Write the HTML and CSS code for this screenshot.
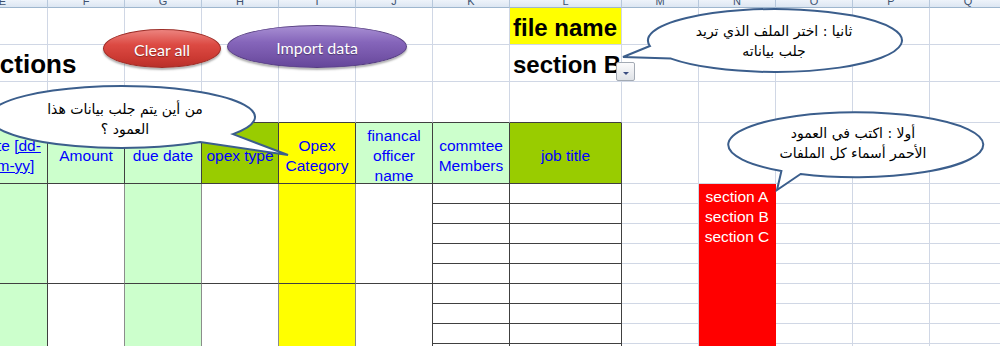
FILE: index.html
```html
<!DOCTYPE html>
<html lang="en">
<head>
<meta charset="utf-8">
<title>Sections sheet</title>
<link rel="stylesheet" href="styles.css">
</head>
<body>
<div class="sheet">
  <!-- column headers -->
  <div class="ch ch-e"><span>E</span></div>
  <div class="ch"><span>F</span></div>
  <div class="ch"><span>G</span></div>
  <div class="ch"><span>H</span></div>
  <div class="ch"><span>I</span></div>
  <div class="ch"><span>J</span></div>
  <div class="ch"><span>K</span></div>
  <div class="ch"><span>L</span></div>
  <div class="ch"><span>M</span></div>
  <div class="ch"><span>N</span></div>
  <div class="ch"><span>O</span></div>
  <div class="ch"><span>P</span></div>
  <div class="ch"><span>Q</span></div>

  <!-- row 1 -->
  <div class="c"></div><div class="c"></div><div class="c"></div><div class="c"></div>
  <div class="c"></div><div class="c"></div><div class="c"></div>
  <div class="c big fname">file name</div>
  <div class="c"></div><div class="c"></div><div class="c"></div><div class="c"></div><div class="c"></div>

  <!-- row 2 -->
  <div class="c big title"><span>Sections</span></div>
  <div class="c"></div><div class="c"></div><div class="c"></div>
  <div class="c"></div><div class="c"></div><div class="c"></div>
  <div class="c big sel">section B</div>
  <div class="c"></div><div class="c"></div><div class="c"></div><div class="c"></div><div class="c"></div>

  <!-- row 3 -->
  <div class="c tt"></div><div class="c tt"></div><div class="c tt"></div><div class="c tt"></div>
  <div class="c tt"></div><div class="c tt"></div><div class="c tt"></div><div class="c tt"></div>
  <div class="c"></div><div class="c"></div><div class="c"></div><div class="c"></div><div class="c"></div>

  <!-- row 4 : table header -->
  <div class="c th lg"><span>Date <u>[dd-</u><br><u>mm-yy]</u></span></div>
  <div class="c th lg"><span>Amount</span></div>
  <div class="c th lg"><span>due date</span></div>
  <div class="c th dg"><span>opex type</span></div>
  <div class="c th yl"><span>Opex Category</span></div>
  <div class="c th lg"><span>financal officer name</span></div>
  <div class="c th lg"><span>commtee Members</span></div>
  <div class="c th dg"><span>job title</span></div>
  <div class="c"></div><div class="c"></div><div class="c"></div><div class="c"></div><div class="c"></div>

  <!-- row 5 -->
  <div class="c m5 lg dk"></div>
  <div class="c m5"></div>
  <div class="c m5 lg"></div>
  <div class="c m5"></div>
  <div class="c m5 yl"></div>
  <div class="c m5 dk"></div>
  <div class="c tb"></div><div class="c tb"></div><div class="c"></div>
  <div class="c rd">section A</div>
  <div class="c"></div><div class="c"></div><div class="c"></div>

  <!-- row 6 -->
  <div class="c tb"></div><div class="c tb"></div><div class="c"></div>
  <div class="c rd">section B</div>
  <div class="c"></div><div class="c"></div><div class="c"></div>

  <!-- row 7 -->
  <div class="c tb"></div><div class="c tb"></div><div class="c"></div>
  <div class="c rd">section C</div>
  <div class="c"></div><div class="c"></div><div class="c"></div>

  <!-- row 8 -->
  <div class="c tb"></div><div class="c tb"></div><div class="c"></div>
  <div class="c rd"></div>
  <div class="c"></div><div class="c"></div><div class="c"></div>

  <!-- row 9 -->
  <div class="c tb"></div><div class="c tb"></div><div class="c"></div>
  <div class="c rd"></div>
  <div class="c"></div><div class="c"></div><div class="c"></div>

  <!-- row 10 -->
  <div class="c m5 lg dk"></div>
  <div class="c m5"></div>
  <div class="c m5 lg"></div>
  <div class="c m5"></div>
  <div class="c m5 yl"></div>
  <div class="c m5 dk"></div>
  <div class="c tb"></div><div class="c tb"></div><div class="c"></div>
  <div class="c rd"></div>
  <div class="c"></div><div class="c"></div><div class="c"></div>

  <!-- row 11 -->
  <div class="c tb"></div><div class="c tb"></div><div class="c"></div>
  <div class="c rd"></div>
  <div class="c"></div><div class="c"></div><div class="c"></div>

  <!-- row 12 -->
  <div class="c tb"></div><div class="c tb"></div><div class="c"></div>
  <div class="c rd"></div>
  <div class="c"></div><div class="c"></div><div class="c"></div>

  <!-- row 13 -->
  <div class="c tb"></div><div class="c tb"></div><div class="c"></div>
  <div class="c rd"></div>
  <div class="c"></div><div class="c"></div><div class="c"></div>
</div>

<!-- floating shapes over the sheet -->
<div class="btn btn-clear">Clear all</div>
<div class="btn btn-import">Import data</div>
<div class="dd"></div>

<svg class="shapes" width="1000" height="346" viewBox="0 0 1000 346" aria-hidden="true">
  <path class="bubble" d="M233.0,134.1 L288,155 L200.2,142.1 A133,31 0 1 1 233.0,134.1 Z"/>
  <path class="bubble" d="M671.0,58.6 L623,57 L649.9,46.0 A127,31.5 0 1 1 671.0,58.6 Z"/>
  <path class="bubble" d="M800.6,174.0 L777,190 L781.4,171.1 A127.5,32.5 0 1 1 800.6,174.0 Z"/>
</svg>

<div class="bt bt1">من أين يتم جلب بيانات هذا<br>العمود ؟</div>
<div class="bt bt2">ثانيا : اختر الملف الذي تريد<br>جلب بياناته</div>
<div class="bt bt3">أولا : اكتب في العمود<br>الأحمر أسماء كل الملفات</div>
</body>
</html>
```

FILE: styles.css
```css
* {
  box-sizing: border-box;
  margin: 0;
  padding: 0;
}

html, body {
  width: 1000px;
  height: 346px;
  overflow: hidden;
  background: #ffffff;
}

body {
  position: relative;
  font-family: "Liberation Sans", Arial, sans-serif;
  color: #000;
}

/* ---------- sheet grid ---------- */
.sheet {
  display: grid;
  grid-template-columns: repeat(7, 77px) 112px repeat(5, 77px);
  grid-template-rows: 8px 37px 37px 41px 61px repeat(9, 20px);
  width: max-content;
  margin-left: -29px;
}

.c {
  border-right: 1px solid #d0d7e5;
  border-bottom: 1px solid #d0d7e5;
  min-width: 0;
}

/* column header strip */
.ch {
  background: linear-gradient(#eef3fa, #dce6f2);
  border-right: 1px solid #b7c8dc;
  border-bottom: 1px solid #9eb6ce;
  overflow: hidden;
  text-align: center;
  font-size: 11px;
  color: #3e5270;
}
.ch span {
  display: block;
  line-height: 12px;
  margin-top: -5px;
}
.ch-e span {
  margin-left: -13px;
}

/* big bold labels */
.big {
  display: flex;
  align-items: flex-end;
  padding: 0 0 4px 3px;
  font-weight: bold;
  font-size: 24px;
  line-height: 1;
  white-space: nowrap;
}
.fname {
  background: #ffff00;
}
.title {
  font-size: 26px;
  padding-left: 0;
}
.title span {
  margin-left: -3px;
}

/* table */
.tt {
  border-bottom-color: #404040;
}
.th {
  display: flex;
  align-items: center;
  justify-content: center;
  text-align: center;
  padding: 5px 2px 0;
  color: #0000ff;
  font-size: 15.5px;
  line-height: 20px;
  border-right-color: #404040;
  border-bottom-color: #404040;
}
.lg { background: #ccffcc; }
.dg { background: #99cc00; }
.yl { background: #ffff00; }

.m5 {
  grid-row: span 5;
  border-right-color: #8c8c8c;
  border-bottom-color: #404040;
}
.m5.dk {
  border-right-color: #404040;
}
.tb {
  border-right-color: #404040;
  border-bottom-color: #404040;
}
.rd {
  background: #ff0000;
  border-color: #ff0000;
  color: #ffffff;
  display: flex;
  align-items: flex-end;
  justify-content: center;
  font-size: 15.5px;
  line-height: 12px;
  white-space: nowrap;
}

/* ---------- floating shapes ---------- */
.btn {
  position: absolute;
  border-radius: 50%;
  display: flex;
  align-items: center;
  justify-content: center;
  padding-top: 2px;
  color: #ffffff;
  font-family: Lato, "Open Sans", sans-serif;
  font-size: 16px;
  text-shadow: 0 1px 1px rgba(0, 0, 0, 0.35);
  box-shadow: 0 2px 2px rgba(0, 0, 0, 0.3);
  white-space: nowrap;
}
.btn-clear {
  left: 103px;
  top: 29px;
  width: 118px;
  height: 39px;
  background: linear-gradient(#ec837e 0%, #dc4a43 40%, #cc3a33 75%, #b9302a 100%);
  border: 1px solid #9d2e28;
}
.btn-import {
  left: 227px;
  top: 25px;
  width: 180px;
  height: 43px;
  background: linear-gradient(#a88fd3 0%, #8565ba 40%, #7454a8 75%, #65479a 100%);
  border: 1px solid #553d80;
}

.dd {
  position: absolute;
  left: 616px;
  top: 62px;
  width: 19px;
  height: 19px;
  border: 1px solid #a3aab4;
  border-radius: 2px;
  background: linear-gradient(#fbfbfc, #dfe2e7);
}
.dd::after {
  content: "";
  position: absolute;
  left: 6px;
  top: 9px;
  border-left: 3px solid transparent;
  border-right: 3px solid transparent;
  border-top: 3px solid #3a4d80;
}

.shapes {
  position: absolute;
  left: 0;
  top: 0;
}
.bubble {
  fill: #ffffff;
  stroke: #3b5e8c;
  stroke-width: 2;
  stroke-linejoin: miter;
}

.bt {
  position: absolute;
  direction: rtl;
  text-align: center;
  white-space: nowrap;
  font-family: "DejaVu Sans", sans-serif;
  font-size: 14px;
  line-height: 20px;
  color: #000;
}
.bt1 {
  left: 25px;
  top: 99px;
  width: 200px;
}
.bt2 {
  left: 674px;
  top: 21px;
  width: 200px;
}
.bt3 {
  left: 753px;
  top: 123px;
  width: 200px;
}
```
